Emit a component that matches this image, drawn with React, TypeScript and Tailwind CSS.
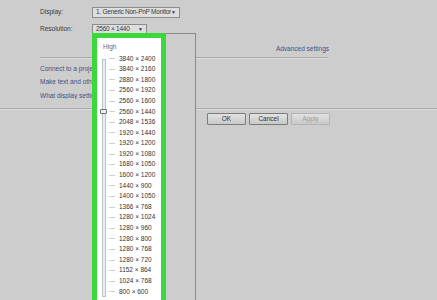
import React from "react";

const RESOLUTIONS = [
  "3840 × 2400",
  "3840 × 2160",
  "2880 × 1800",
  "2560 × 1920",
  "2560 × 1600",
  "2560 × 1440",
  "2048 × 1536",
  "1920 × 1440",
  "1920 × 1200",
  "1920 × 1080",
  "1680 × 1050",
  "1600 × 1200",
  "1440 × 900",
  "1400 × 1050",
  "1366 × 768",
  "1280 × 1024",
  "1280 × 960",
  "1280 × 800",
  "1280 × 768",
  "1280 × 720",
  "1152 × 864",
  "1024 × 768",
  "800 × 600",
];

const Dropdown = ({ label, width }: { label: string; width: string }) => (
  <div
    className={`flex h-full items-center justify-between border border-[#8c8c8c] bg-[#dedede] pl-[3px] pr-[3px] ${width}`}
  >
    <span className="whitespace-nowrap tracking-[-0.25px]">{label}</span>
    <span className="text-[5px] leading-none">▼</span>
  </div>
);

const Button = ({ children, disabled }: { children: React.ReactNode; disabled?: boolean }) => (
  <div
    className={`flex h-[12px] w-[39px] items-center justify-center rounded-[1px] border bg-gradient-to-b from-[#e2e2e2] to-[#c9c9c9] ${
      disabled ? "border-[#b4b4b4] text-[#9c9c9c]" : "border-[#7b7b7b] text-[#333]"
    }`}
  >
    {children}
  </div>
);

export default function App() {
  return (
    <div className="relative h-[300px] w-[437px] overflow-hidden bg-[#cdcdcd] font-['Liberation_Sans',Arial,sans-serif] text-[6.5px] leading-none text-[#3a3a3a]">
      <div className="pl-[40px] pt-[7px]">
        <div className="flex h-[11px] items-center">
          <span className="w-[52px]">Display:</span>
          <Dropdown label="1. Generic Non-PnP Monitor" width="w-[88px]" />
        </div>
        <div className="mt-[6px] flex h-[10px] items-center">
          <span className="w-[52px]">Resolution:</span>
          <Dropdown label="2560 × 1440" width="w-[55px]" />
        </div>
        <div className="mt-[12px] flex w-[289px] justify-end text-[#3d5283]">Advanced settings</div>
        <div className="mt-[4px] h-[2px] w-[288px] border-t border-[#a9a9a9] bg-[#dcdcdc]" />
        {/* links run on behind the open popup, so they are cut where it begins */}
        <div className="mt-[7px] flex w-[52px] flex-col gap-[7px] overflow-hidden text-[#3d5283]">
          <span className="whitespace-nowrap">Connect to a projector</span>
          <span className="whitespace-nowrap">Make text and other items</span>
          <span className="whitespace-nowrap">What display settings</span>
        </div>
      </div>

      <div className="mt-[9px] h-[2px] w-full border-t border-[#a9a9a9] bg-[#dcdcdc]" />

      <div className="mt-[3px] flex gap-[3px] pl-[207px]">
        <Button>OK</Button>
        <Button>Cancel</Button>
        <Button disabled>Apply</Button>
      </div>

      {/* open resolution popup */}
      <div className="absolute bottom-0 left-[92px] top-[33px] w-[104px] border-r border-t border-[#8a8a8a] bg-[#cdcdcd]">
        <div className="absolute bottom-[-10px] left-0 top-[-1px] w-[74px] border-[5px] border-[#3bd83b] bg-white">
          <div className="pl-[6px] pt-[6px] text-[#666]">High</div>
          <div className="relative mt-[3px]">
            <div className="absolute bottom-0 left-[5px] top-[5px] w-[4px] border border-[#b9c3cf] bg-[#e9eef3]" />
            <div className="absolute left-[3px] top-[55px] h-[5px] w-[7px] rounded-[1px] border border-[#6f6f6f] bg-[#eeeeee]" />
            {RESOLUTIONS.map((r) => (
              <div key={r} className="flex h-[10.6px] items-center">
                <span className="ml-[12px] h-px w-[6px] bg-[#cfcfcf]" />
                <span className="ml-[4px] whitespace-nowrap text-[#333]">{r}</span>
              </div>
            ))}
          </div>
        </div>
      </div>
    </div>
  );
}
